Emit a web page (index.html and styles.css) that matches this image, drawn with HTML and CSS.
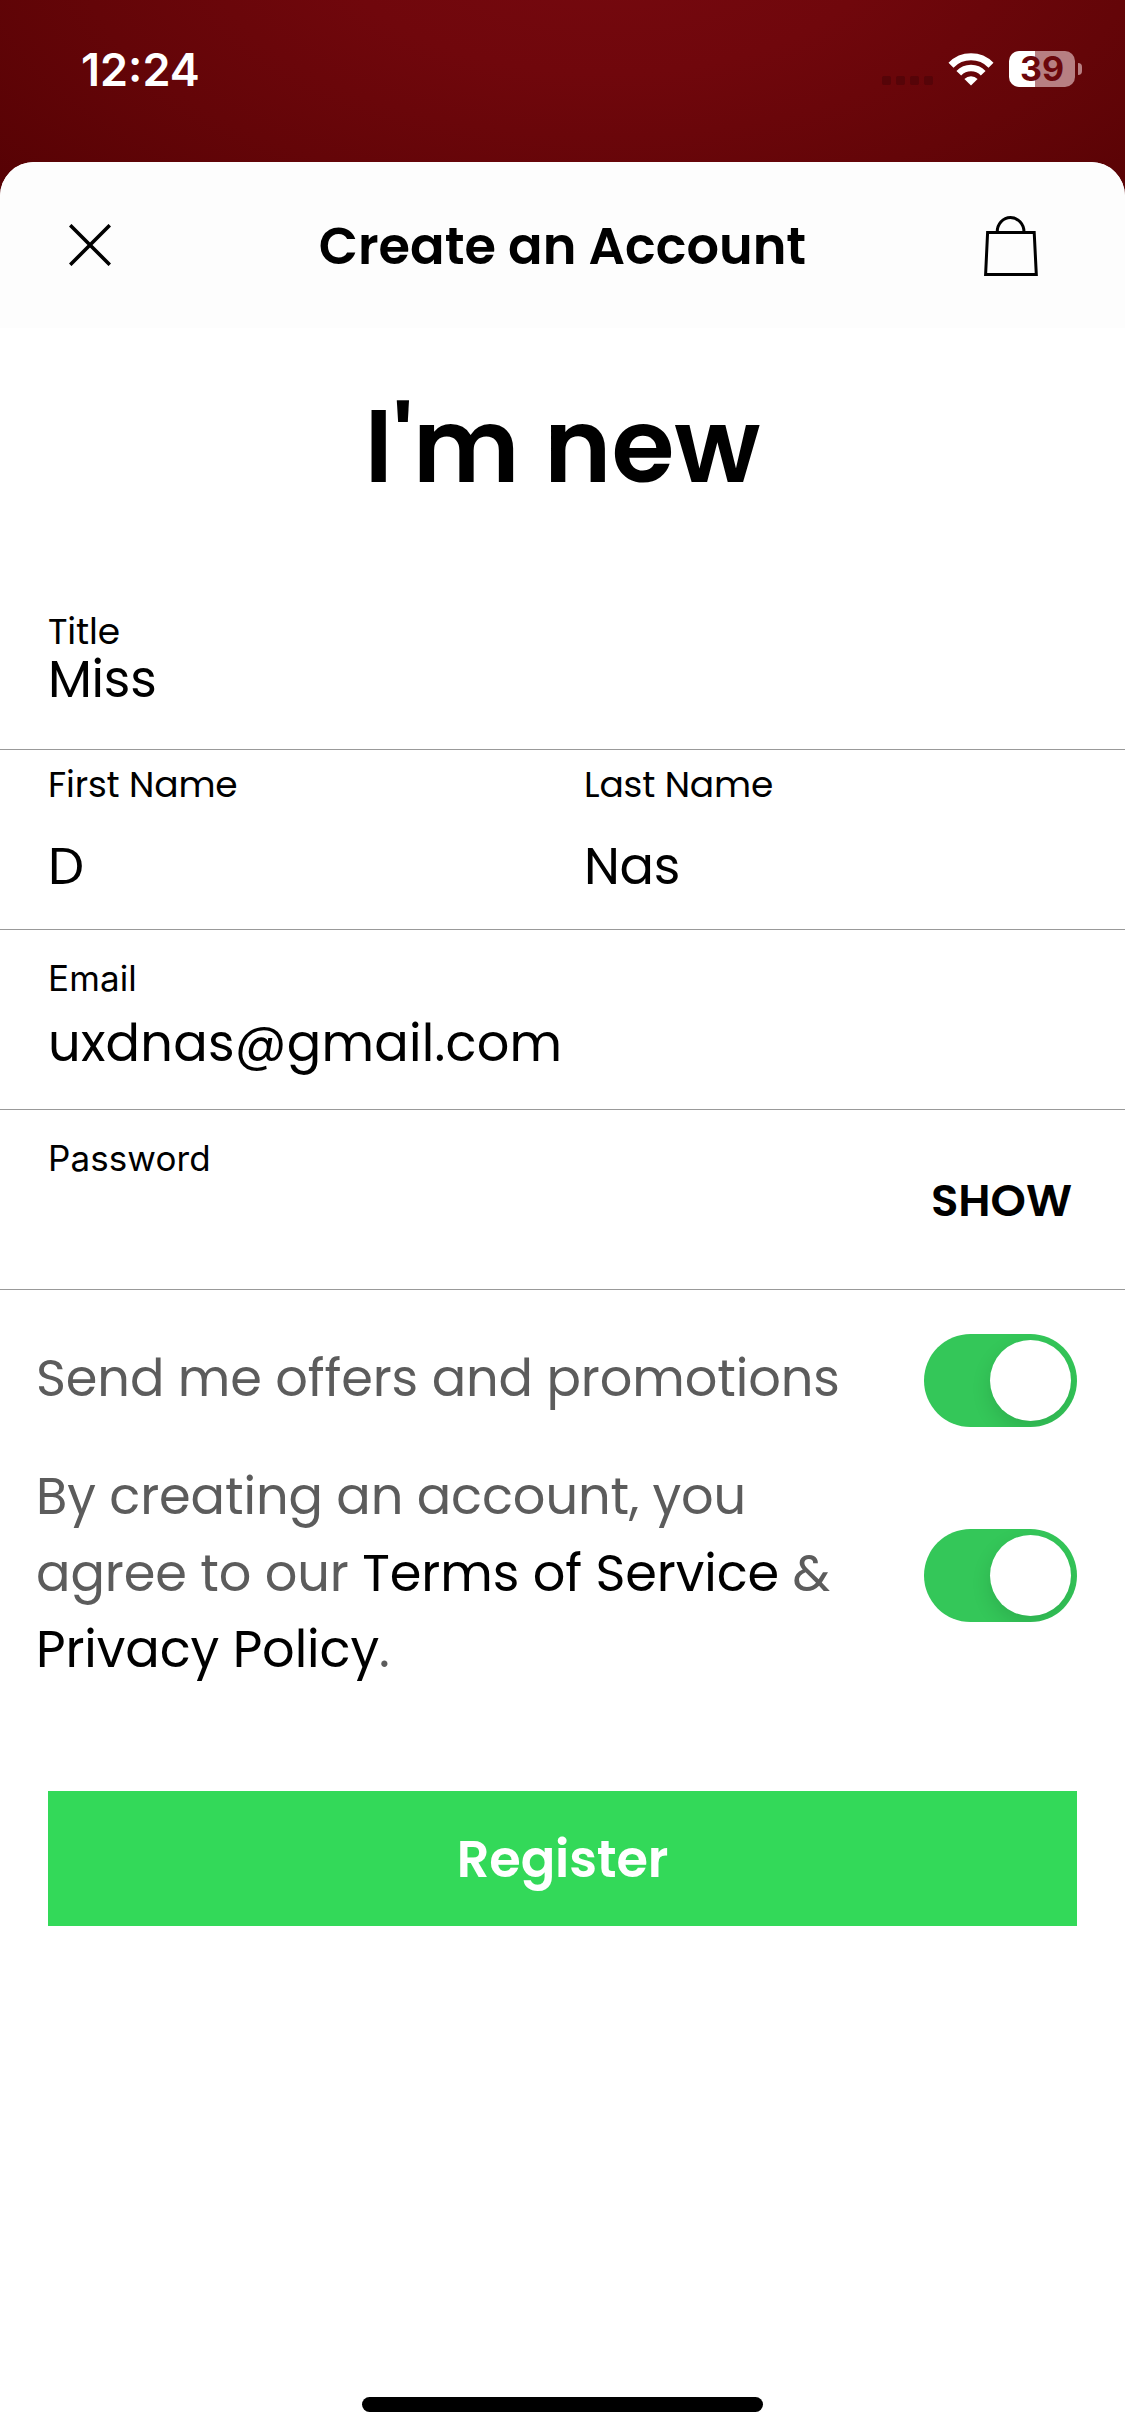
FILE: index.html
```html
<!DOCTYPE html>
<html lang="en">
<head>
<meta charset="utf-8">
<title>Create an Account</title>
<link rel="stylesheet" href="styles.css">
</head>
<body>
<div class="screen">
  <div class="status-bar">
    <span class="clock">12:24</span>
    <div class="status-icons">
      <span class="signal"><i></i><i></i><i></i><i></i></span>
      <svg class="wifi" width="46" height="34" viewBox="0 0 46 34" fill="none" stroke="#fff">
        <path d="M3 13.2A28 28 0 0 1 43 13.2" stroke-width="7"/>
        <path d="M10.8 21.2A17 17 0 0 1 35.2 21.2" stroke-width="6.6"/>
        <path d="M23 33.5L16.4 27A9.3 9.3 0 0 1 29.6 27Z" fill="#fff" stroke="none"/>
      </svg>
      <span class="battery"><span class="level">39</span><i class="cap"></i></span>
    </div>
  </div>
  <main class="sheet">
    <header class="nav">
      <svg class="close" width="42" height="42" viewBox="0 0 42 42" stroke="#000" stroke-width="3.6"><path d="M1.2 1.2L40.8 40.8M40.8 1.2L1.2 40.8"/></svg>
      <span class="nav-title">Create an Account</span>
      <svg class="bag" width="56" height="60" viewBox="0 0 56 60" fill="none" stroke="#000" stroke-width="3"><path d="M4.6 16.5H51.2L53.3 58.4H2.6Z"/><path d="M14.2 16C14.2 8 20 1.6 27.5 1.6S41 8 41 16"/></svg>
    </header>
    <h1 class="headline">I'm new</h1>
    <form class="form">
      <div class="row row-title">
        <div class="field"><label class="label">Title</label><span class="value">Miss</span></div>
      </div>
      <div class="row row-names">
        <div class="field"><label class="label">First Name</label><span class="value">D</span></div>
        <div class="field"><label class="label">Last Name</label><span class="value">Nas</span></div>
      </div>
      <div class="row row-login">
        <div class="field"><label class="label system">Email</label><span class="value email">uxdnas@gmail.com</span></div>
      </div>
      <div class="row row-login">
        <div class="field"><label class="label system">Password</label></div>
        <span class="show">SHOW</span>
      </div>
      <div class="consents">
        <div class="consent">
          <p class="consent-text">Send me offers and promotions</p>
          <span class="toggle"><i></i></span>
        </div>
        <div class="consent terms">
          <p class="consent-text">By creating an account, you<br>agree to our <b>Terms of Service</b> &amp;<br><b>Privacy Policy</b>.</p>
          <span class="toggle"><i></i></span>
        </div>
      </div>
      <button class="register" type="button">Register</button>
    </form>
    <div class="home"></div>
  </main>
</div>
</body>
</html>
```
FILE: styles.css
```css
* { box-sizing: border-box; }
body { margin: 0; background: #fff; color: #000; font-family: Poppins, Inter, "Liberation Sans", sans-serif; }
.screen {
  display: flex; flex-direction: column; width: 1125px; height: 2436px;
  background: radial-gradient(ellipse 780px 380px at 54% -60px, #76090f 0%, #70070c 35%, #640508 68%, #570204 100%);
}
.status-bar { display: flex; justify-content: space-between; height: 162px; padding: 51px 43px 0 81px; color: #fff; font-family: Inter, sans-serif; }
.clock { font-size: 45px; font-weight: 600; line-height: 37px; }
.status-icons { display: flex; align-items: flex-start; height: 36px; }
.signal { display: flex; gap: 5px; padding-top: 25px; margin-right: 15px; }
.signal i { width: 9px; height: 9px; border-radius: 2px; background: #560408; }
.wifi { margin: 1px 15px 0 0; }
.battery { display: flex; align-items: center; gap: 3px; height: 36px; }
.level { width: 66px; height: 36px; border-radius: 10px; background: linear-gradient(90deg, #fff 26px, #b77f82 26px); color: #6b070c; font-size: 34px; font-weight: 700; line-height: 36px; text-align: center; }
.cap { width: 4px; height: 12px; border-radius: 0 6px 6px 0; background: #b77f82; }
.sheet { display: flex; flex-direction: column; flex: 1; background: #fff; border-radius: 34px 34px 0 0; overflow: hidden; }
.nav { display: grid; grid-template-columns: 1fr auto 1fr; height: 166px; padding: 0 69px; background: #fdfdfd; }
.close { margin-top: 62px; }
.nav-title { margin-top: 54px; font-size: 51px; font-weight: 600; line-height: 60px; }
.bag { margin: 54px 17px 0 0; justify-self: end; }
.headline { margin: 59px 0 -1px; font-size: 102px; font-weight: 600; line-height: 120px; text-align: center; }
.form { display: flex; flex-direction: column; }
.row { display: flex; height: 180px; padding: 0 48px; border-bottom: 1px solid #999; }
.field { display: flex; flex-direction: column; flex: 1; }
.label { font-size: 36px; line-height: 37px; letter-spacing: -.15px; }
.label.system { font-family: Inter, sans-serif; font-size: 35px; line-height: 36px; letter-spacing: .1px; }
.value { font-size: 51px; line-height: 58px; letter-spacing: -.3px; }
.email { letter-spacing: .25px; }
.row-title { height: 244px; padding-top: 107px; }
.row-names { padding-top: 16px; }
.row-names .field { gap: 34px; }
.row-names .field:first-child { flex: 0 0 536px; }
.row-login { padding: 30px 53px 0 48px; }
.row-login .field { gap: 18px; }
.show { margin-top: 33px; font-size: 45px; font-weight: 600; line-height: 55px; }
.consents { display: flex; flex-direction: column; gap: 31px; padding: 44px 48px 0 36px; color: #5c5c5c; }
.consent { display: flex; justify-content: space-between; align-items: flex-start; }
.consent-text { margin: 6px 0 -6px; font-size: 51px; line-height: 76.5px; letter-spacing: -.1px; white-space: nowrap; }
.consent.terms .consent-text { margin: 0; }
.consent-text b { font-weight: 400; color: #000; }
.toggle { display: flex; justify-content: flex-end; width: 153px; height: 93px; padding: 6px; border-radius: 47px; background: #34c759; overflow: hidden; }
.toggle i { width: 81px; height: 81px; border-radius: 50%; background: #fff; box-shadow: 0 8px 20px rgba(0,0,0,.12); }
.terms .toggle { margin-top: 71px; }
.register { height: 135px; margin: 103px 48px 0; padding: 2px 0 0; border: 0; background: #33d959; color: #fff; font: inherit; font-size: 51px; font-weight: 600; letter-spacing: -.15px; }
.home { width: 401px; height: 15px; margin: auto auto 24px; border-radius: 8px; background: #000; }
```
